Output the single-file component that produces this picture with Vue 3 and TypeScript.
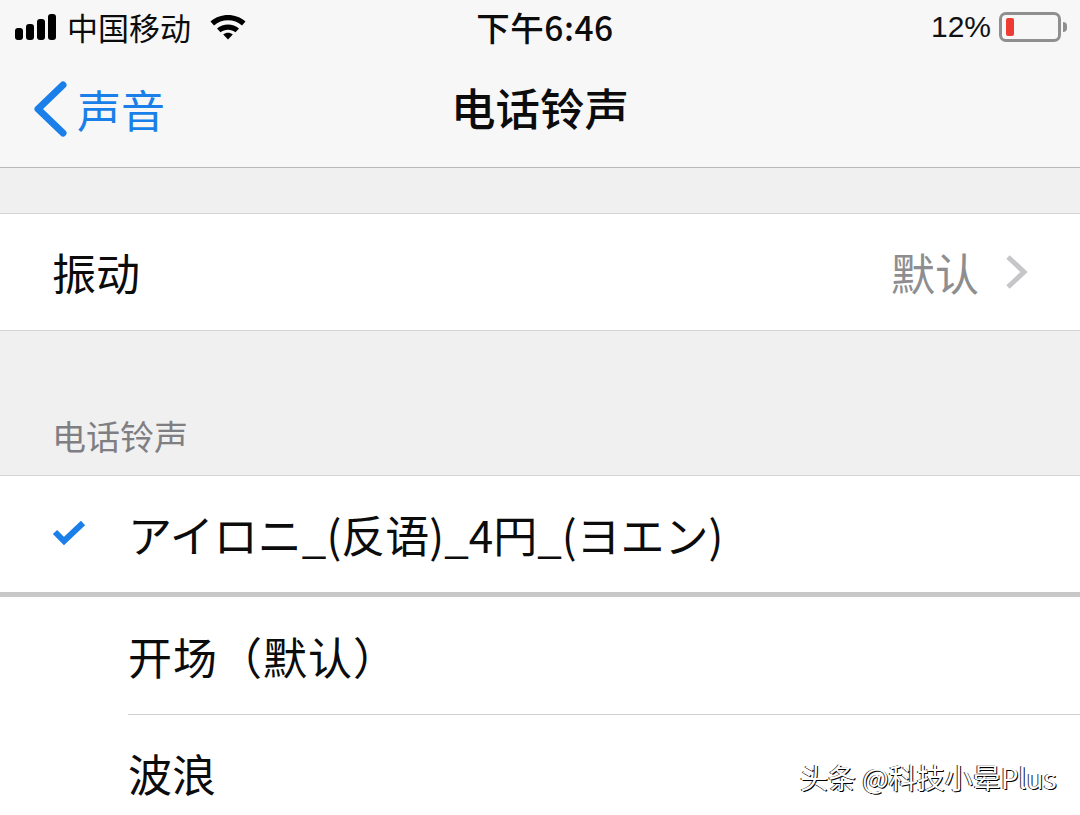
<script setup lang="ts">
const bars: number[] = [12, 16, 21, 26];
</script>

<template>
  <div class="page">
    <header class="top">
      <div class="status">
        <div class="status-left">
          <div class="signal">
            <i v-for="h in bars" :key="h" class="bar" :style="{ height: h + 'px' }"></i>
          </div>
          <span class="carrier">中国移动</span>
          <svg class="wifi" width="38" height="28" viewBox="0 0 38 28">
            <path d="M1.5 9.5C11 .8 27 .8 36.500 9.500L33 13.500C25.500 6.500 12.500 6.500 5 13.500Z" fill="#000" />
            <path d="M8 16.500C14 11.200 24 11.200 30 16.500L26.500 20.300C22.500 16.800 15.500 16.800 11.500 20.300Z" fill="#000" />
            <path d="M14.200 22.500C17 20.300 21 20.300 23.800 22.500L19 27.500Z" fill="#000" />
          </svg>
        </div>
        <div class="clock">下午6:46</div>
        <div class="status-right">
          <span class="percent">12%</span>
          <div class="battery"><i class="level"></i></div>
          <i class="cap"></i>
        </div>
      </div>
      <nav class="nav">
        <div class="back">
          <svg width="36" height="56" viewBox="0 0 36 56">
            <path d="M31 4 L6 28 L31 52" fill="none" stroke="#1a7fe8" stroke-width="7" stroke-linecap="round" stroke-linejoin="round" />
          </svg>
          <span>声音</span>
        </div>
        <div class="title">电话铃声</div>
      </nav>
    </header>

    <div class="gap-small"></div>

    <div class="row vibrate">
      <span class="label">振动</span>
      <span class="value">默认</span>
      <svg class="chev" width="24" height="36" viewBox="0 0 24 36">
        <path d="M3 3 L19 18 L3 33" fill="none" stroke="#c6c6c9" stroke-width="5" />
      </svg>
    </div>

    <div class="section-head">电话铃声</div>

    <div class="row tone first">
      <svg class="check" width="34" height="28" viewBox="0 0 34 28">
        <path d="M3 13 L12 22 L31 4" fill="none" stroke="#1a7fe8" stroke-width="6" />
      </svg>
      <span class="label">アイロニ_(反语)_4円_(ヨエン)</span>
    </div>
    <div class="thick"></div>
    <div class="row tone second">
      <span class="label">开场（默认）</span>
    </div>
    <div class="row tone last">
      <span class="label">波浪</span>
    </div>

    <div class="mark">头条 @科技小晕Plus</div>
  </div>
</template>

<style>
html, body { margin: 0; background: #fff; }
</style>

<style scoped>
.page {
  position: relative;
  width: 1080px;
  height: 815px;
  overflow: hidden;
  background: #fff;
  color: #0c0c0c;
  font-family: "Noto Sans CJK SC", "Liberation Sans", sans-serif;
}
.top {
  height: 167px;
  background: #f7f7f8;
  border-bottom: 1px solid #b9b9bb;
}
.status {
  height: 54px;
  padding: 0 13px 0 15px;
  display: grid;
  grid-template-columns: 1fr auto 1fr;
  align-items: center;
}
.status-left { display: flex; align-items: center; }
.signal { display: flex; align-items: flex-end; gap: 3px; width: 44px; height: 26px; }
.bar { display: block; width: 8px; background: #000; border-radius: 3px; }
.carrier { margin-left: 8px; font-size: 31px; line-height: 44px; }
.wifi { margin-left: 18px; margin-top: -3px; }
.clock {
  font-size: 33.500px;
  line-height: 44px;
  font-weight: 500;
  letter-spacing: 0.500px;
  padding-left: 8px;
}
.status-right { display: flex; align-items: center; justify-content: flex-end; }
.percent { font-family: "Liberation Sans", sans-serif; font-size: 30px; margin-right: 8px; color: #111; }
.battery {
  box-sizing: border-box;
  width: 62px;
  height: 30px;
  border: 3px solid #8f8f8f;
  border-radius: 7px;
  padding: 3px 4px;
}
.level { display: block; width: 8px; height: 18px; background: #ee3b33; border-radius: 2px; }
.cap { display: block; width: 4px; height: 10px; margin-left: 2px; background: #8f8f8f; border-radius: 0 4px 4px 0; }
.nav {
  position: relative;
  height: 113px;
  display: flex;
  align-items: center;
  justify-content: center;
}
.back {
  position: absolute;
  left: 32px;
  top: 27px;
  display: flex;
  align-items: center;
  gap: 9px;
  color: #1a7fe8;
  font-size: 44px;
  line-height: 56px;
}
.title { font-size: 44.500px; font-weight: 500; margin-top: -8px; }
.gap-small { height: 45px; background: #f0f0f1; border-bottom: 1px solid #d4d4d6; }
.row {
  display: flex;
  align-items: center;
  background: #fff;
  font-size: 44px;
}
.vibrate {
  height: 116px;
  padding: 0 51px 0 52px;
  border-bottom: 1px solid #d4d4d6;
}
.vibrate .label { flex: 1; }
.value { color: #8e8e90; }
.chev { margin-left: 26px; }
.section-head {
  box-sizing: border-box;
  height: 145px;
  padding: 81px 0 0 52px;
  background: #f0f0f1;
  border-bottom: 1px solid #d4d4d6;
  color: #7f7f83;
  font-size: 34px;
  line-height: 48px;
}
.tone { position: relative; padding-left: 128px; height: 116px; }
.check { position: absolute; left: 52px; top: 43px; }
.thick { height: 5px; background: #c8c8c9; }
.second { height: 118px; }
.second .label { letter-spacing: 1px; }
.second::after {
  content: "";
  position: absolute;
  left: 128px;
  right: 0;
  bottom: 0;
  height: 1px;
  background: #d0d0d2;
}
.last { height: 120px; align-items: flex-start; padding-top: 27px; box-sizing: border-box; }
.last .label { line-height: 62px; }
.mark {
  position: absolute;
  left: 800px;
  top: 757px;
  font-size: 28px;
  line-height: 40px;
  color: #fff;
  text-shadow: 1px 1px 0 #000, -1px 0 0 #333;
  white-space: nowrap;
}
</style>
